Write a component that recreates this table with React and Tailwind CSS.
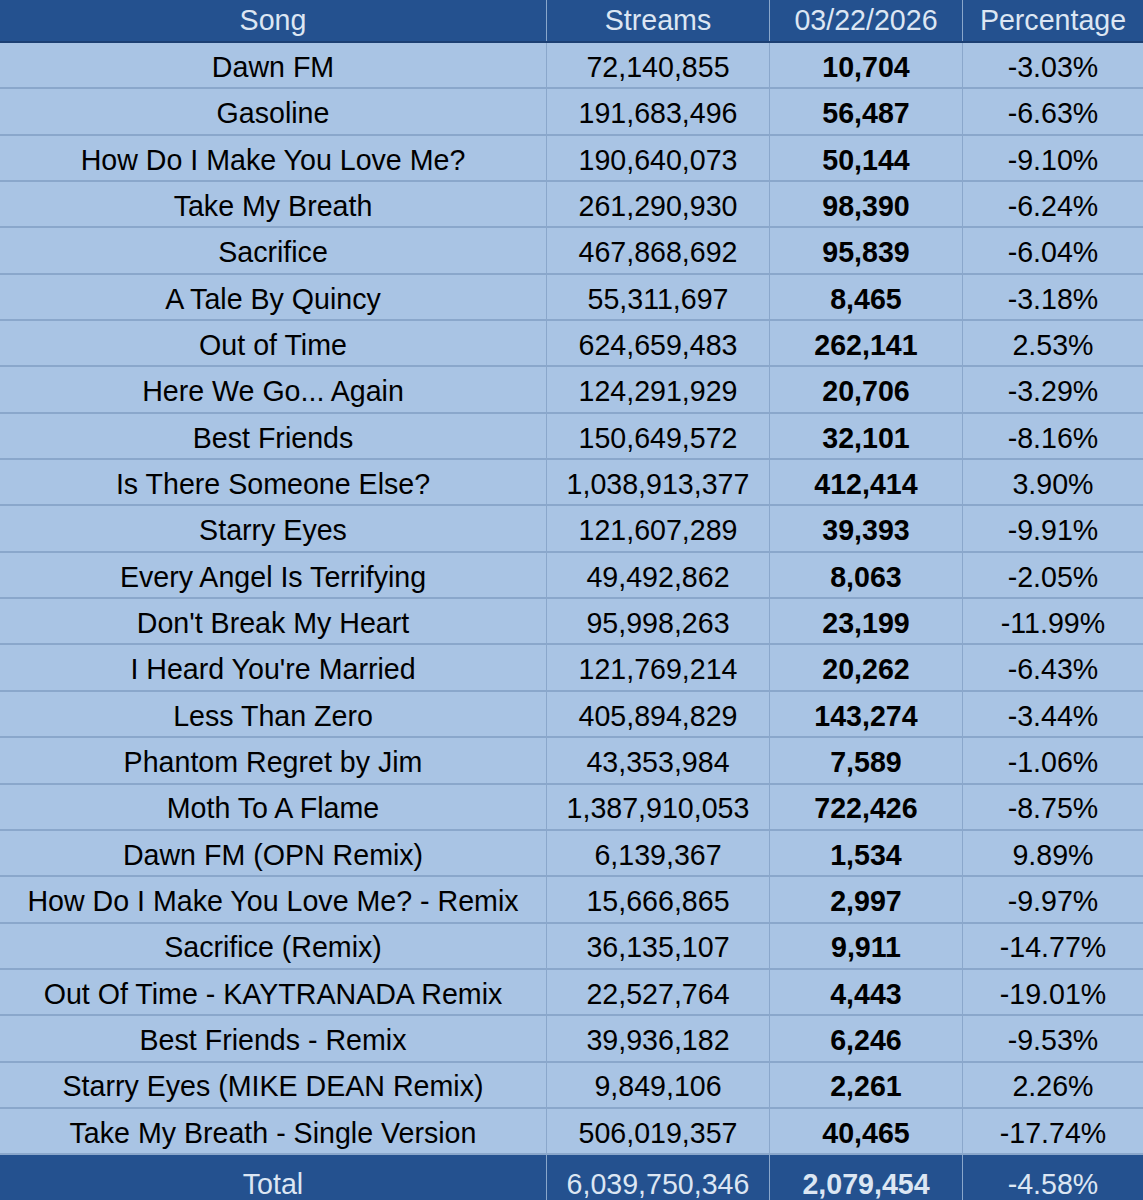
const rows = [
  ['Dawn FM', '72,140,855', '10,704', '-3.03%'],
  ['Gasoline', '191,683,496', '56,487', '-6.63%'],
  ['How Do I Make You Love Me?', '190,640,073', '50,144', '-9.10%'],
  ['Take My Breath', '261,290,930', '98,390', '-6.24%'],
  ['Sacrifice', '467,868,692', '95,839', '-6.04%'],
  ['A Tale By Quincy', '55,311,697', '8,465', '-3.18%'],
  ['Out of Time', '624,659,483', '262,141', '2.53%'],
  ['Here We Go... Again', '124,291,929', '20,706', '-3.29%'],
  ['Best Friends', '150,649,572', '32,101', '-8.16%'],
  ['Is There Someone Else?', '1,038,913,377', '412,414', '3.90%'],
  ['Starry Eyes', '121,607,289', '39,393', '-9.91%'],
  ['Every Angel Is Terrifying', '49,492,862', '8,063', '-2.05%'],
  ["Don't Break My Heart", '95,998,263', '23,199', '-11.99%'],
  ["I Heard You're Married", '121,769,214', '20,262', '-6.43%'],
  ['Less Than Zero', '405,894,829', '143,274', '-3.44%'],
  ['Phantom Regret by Jim', '43,353,984', '7,589', '-1.06%'],
  ['Moth To A Flame', '1,387,910,053', '722,426', '-8.75%'],
  ['Dawn FM (OPN Remix)', '6,139,367', '1,534', '9.89%'],
  ['How Do I Make You Love Me? - Remix', '15,666,865', '2,997', '-9.97%'],
  ['Sacrifice (Remix)', '36,135,107', '9,911', '-14.77%'],
  ['Out Of Time - KAYTRANADA Remix', '22,527,764', '4,443', '-19.01%'],
  ['Best Friends - Remix', '39,936,182', '6,246', '-9.53%'],
  ['Starry Eyes (MIKE DEAN Remix)', '9,849,106', '2,261', '2.26%'],
  ['Take My Breath - Single Version', '506,019,357', '40,465', '-17.74%'],
];

const cols = 'grid grid-cols-[547px_223px_193px_180px]';
const cell = 'flex items-center justify-center border-r border-[#8aa7cb] last:border-r-0 whitespace-nowrap';

export default function App() {
  return (
    <div
      className="w-[1143px] h-[1200px] overflow-hidden bg-[#a9c4e4] text-[28.6px] leading-none"
      style={{ fontFamily: '"Liberation Sans", Arial, sans-serif' }}
    >
      <div className={`${cols} h-[43px] bg-[#24518f] text-[#dce6f3] border-b-2 border-[#1c3f72]`}>
        <div className={`${cell} border-[#1d4279]`}>Song</div>
        <div className={`${cell} border-[#1d4279]`}>Streams</div>
        <div className={`${cell} border-[#1d4279]`}>03/22/2026</div>
        <div className={`${cell} border-[#1d4279]`}>Percentage</div>
      </div>

      {rows.map(([song, streams, daily, pct]) => (
        <div key={song} className={`${cols} h-[46.35px] text-black border-b-2 border-[#8aa7cb]`}>
          <div className={`${cell} pt-[4px]`}>{song}</div>
          <div className={`${cell} pt-[4px]`}>{streams}</div>
          <div className={`${cell} pt-[4px] font-bold`}>{daily}</div>
          <div className={`${cell} pt-[4px]`}>{pct}</div>
        </div>
      ))}

      <div className={`${cols} h-[56px] bg-[#24518f] text-[#dce6f3]`}>
        <div className={`${cell} border-[#1d4279] pt-[2px]`}>Total</div>
        <div className={`${cell} border-[#1d4279] pt-[2px]`}>6,039,750,346</div>
        <div className={`${cell} border-[#1d4279] pt-[2px] font-bold`}>2,079,454</div>
        <div className={`${cell} border-[#1d4279] pt-[2px]`}>-4.58%</div>
      </div>
    </div>
  );
}
